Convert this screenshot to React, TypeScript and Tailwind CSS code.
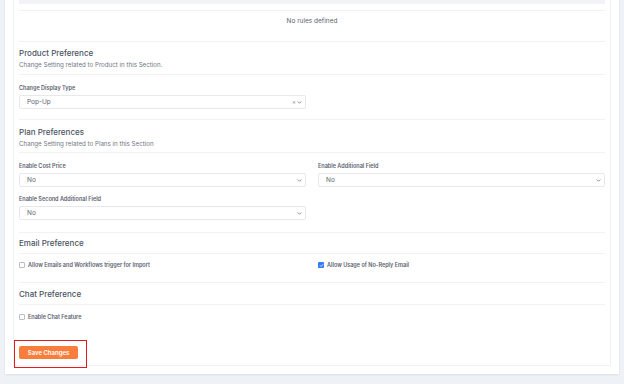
import React from 'react'

function Chevron() {
  return (
    <svg className="h-[5px] w-[5px] text-[#6b7280]" viewBox="0 0 10 10" fill="none">
      <path d="M2 3.5 5 6.5 8 3.5" stroke="currentColor" strokeWidth="1.6" strokeLinecap="round" strokeLinejoin="round" />
    </svg>
  )
}

function Select({ value, clearable }: { value: string; clearable?: boolean }) {
  return (
    <div className="flex h-[14px] items-center justify-between rounded-[2px] border border-[#e6e8ee] bg-white pl-[7px] pr-[3px] leading-[8px]">
      <span className="text-[6.5px] text-[#5b6270]">{value}</span>
      <span className="flex items-center gap-[1px]">
        {clearable && <span className="text-[6px] leading-none text-[#8a909c]">×</span>}
        <Chevron />
      </span>
    </div>
  )
}

function Field({ label, value, clearable }: { label: string; value: string; clearable?: boolean }) {
  return (
    <div>
      <div className="mb-[3px] text-[5.5px] font-semibold leading-[7px] text-[#5b6270]">{label}</div>
      <Select value={value} clearable={clearable} />
    </div>
  )
}

function Checkbox({ label, checked }: { label: string; checked?: boolean }) {
  return (
    <label className="flex h-[8px] items-center gap-[3px] leading-[8px]">
      {checked ? (
        <span className="flex h-[6px] w-[6px] items-center justify-center rounded-[1px] bg-[#2f7cf6]">
          <svg className="h-[5px] w-[5px]" viewBox="0 0 10 10" fill="none">
            <path d="M2.5 5.2 4.3 7 7.6 3.2" stroke="white" strokeWidth="1.6" strokeLinecap="round" strokeLinejoin="round" />
          </svg>
        </span>
      ) : (
        <span className="h-[6px] w-[6px] rounded-[1px] border border-[#b8bdc7] bg-white" />
      )}
      <span className="text-[5.5px] font-semibold text-[#5b6270]">{label}</span>
    </label>
  )
}

function Heading({ title, sub }: { title: string; sub?: string }) {
  return (
    <div>
      <div className="text-[8px] font-medium leading-[11px] text-[#4b5363]">{title}</div>
      {sub && <div className="mt-[1px] text-[6.2px] leading-[9px] text-[#717784]">{sub}</div>}
    </div>
  )
}

export default function App() {
  return (
    <div
      className="min-h-screen bg-[#eef1f6] px-[5px] pb-[10px]"
      style={{ fontFamily: 'Inter, "Open Sans", sans-serif' }}
    >
      <div className="bg-white px-[8px] pb-[8px] shadow-[0_1px_2px_rgba(0,0,0,0.08)]">
        <div className="border-x border-b border-[#eef1f6] px-[5px]">
          <div className="h-[4px] bg-[#f1f3f7]" />
          <div className="h-[6px]" />

          <div className="h-[32px] border-y border-[#f0f1f5] pt-[6px] text-center text-[6.5px] leading-[9px] text-[#5b6270]">
            No rules defined
          </div>

          <div className="h-[33px] border-b border-[#f0f1f5] pt-[6px]">
            <Heading title="Product Preference" sub="Change Setting related to Product in this Section." />
          </div>

          <div className="h-[45px] border-b border-[#f0f1f5] pt-[10px]">
            <div className="w-[287px]">
              <Field label="Change Display Type" value="Pop-Up" clearable />
            </div>
          </div>

          <div className="h-[33px] border-b border-[#f0f1f5] pt-[7px]">
            <Heading title="Plan Preferences" sub="Change Setting related to Plans in this Section" />
          </div>

          <div className="grid h-[80px] grid-cols-2 content-start gap-x-[12px] gap-y-[9px] border-b border-[#f0f1f5] pt-[10px]">
            <Field label="Enable Cost Price" value="No" />
            <Field label="Enable Additional Field" value="No" />
            <Field label="Enable Second Additional Field" value="No" />
          </div>

          <div className="h-[21px] border-b border-[#f0f1f5] pt-[5px]">
            <Heading title="Email Preference" />
          </div>

          <div className="grid h-[29px] grid-cols-2 gap-x-[12px] border-b border-[#f0f1f5] pt-[7px]">
            <Checkbox label="Allow Emails and Workflows trigger for Import" />
            <Checkbox label="Allow Usage of No-Reply Email" checked />
          </div>

          <div className="h-[22px] border-b border-[#f0f1f5] pt-[6px]">
            <Heading title="Chat Preference" />
          </div>

          <div className="pt-[8px]">
            <Checkbox label="Enable Chat Feature" />
          </div>

          <div className="flex pb-[6px] pt-[25px]">
            <div className="relative">
              <button className="flex h-[13px] w-[59px] items-center justify-center rounded-[2px] bg-[#fb7d3c] text-[6px] font-semibold leading-[8px] text-white">
                Save Changes
              </button>
              <div className="absolute left-[-5px] top-[-6px] h-[28px] w-[73px] border border-[#e01b1b]" />
            </div>
          </div>
        </div>
      </div>
    </div>
  )
}
